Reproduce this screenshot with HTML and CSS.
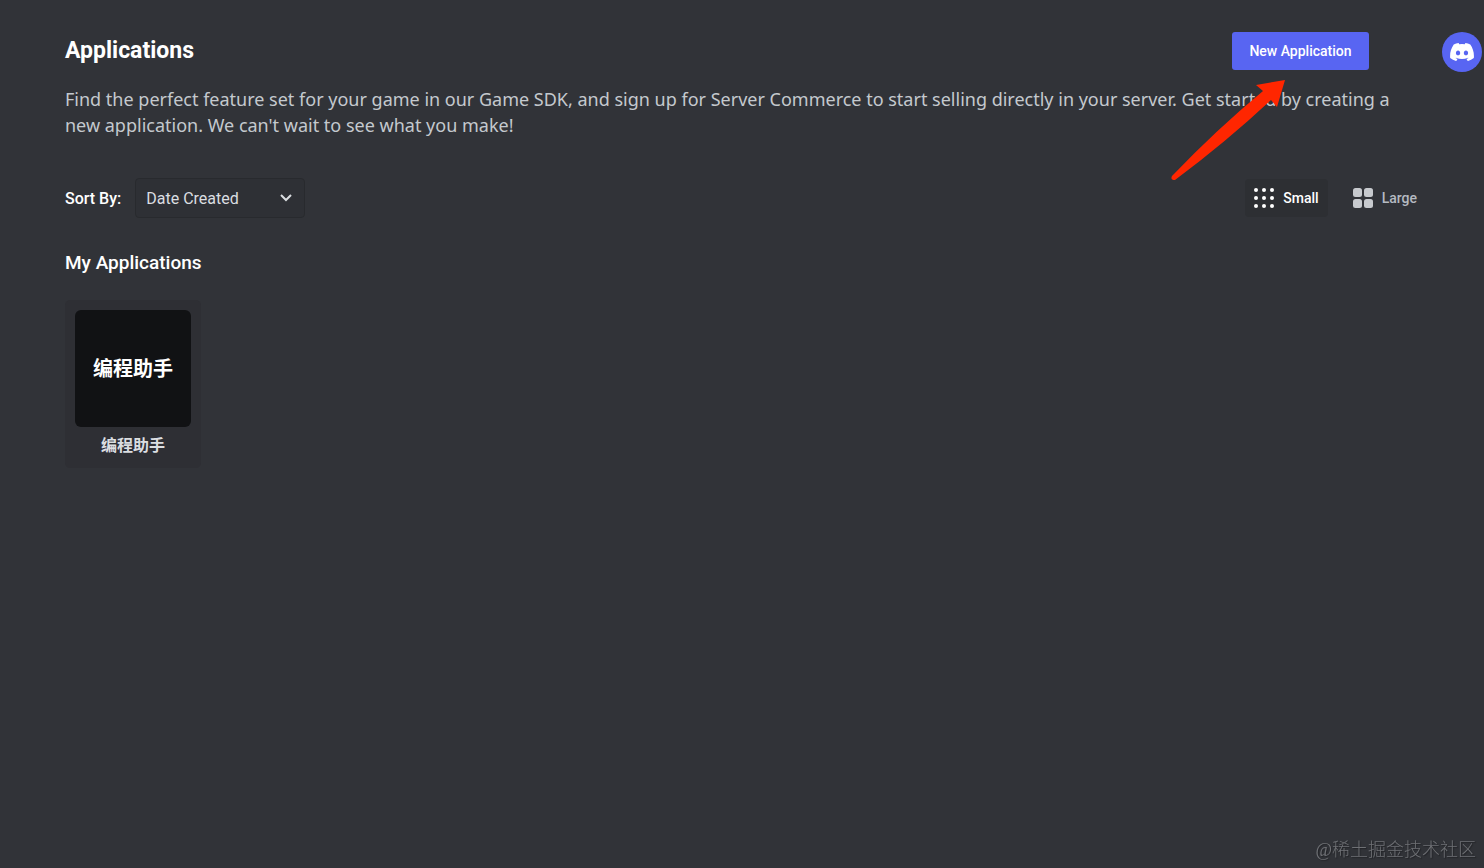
FILE: index.html
```html
<!DOCTYPE html>
<html lang="en">
<head>
    <meta charset="UTF-8">
    <title>Applications</title>
    <link rel="stylesheet" href="styles.css">
</head>
<body>
    <header class="page-header">
        <h1 class="page-title">Applications</h1>
        <div class="new-app">
            <button class="new-app-button" type="button">New Application</button>
            <svg class="arrow" viewBox="0 0 120 104" aria-hidden="true">
                <path fill="#ff2600" d="M117 2 L88 7 L95 13 Q48 52 4 98 Q2 102 7 102 Q58 64 103 22 L109 29 Z"/>
            </svg>
        </div>
        <a class="avatar" href="#" aria-label="Account">
            <svg viewBox="0 0 127 96" aria-hidden="true">
                <path fill="#fff" d="M107.7 8.07A105.15 105.15 0 0 0 81.47 0a72.06 72.06 0 0 0-3.36 6.83 97.68 97.68 0 0 0-29.11 0A72.37 72.37 0 0 0 45.64 0a105.89 105.89 0 0 0-26.25 8.09C2.79 32.65-1.71 56.6.54 80.21a105.73 105.73 0 0 0 32.17 16.15 77.7 77.7 0 0 0 6.89-11.11 68.42 68.42 0 0 1-10.85-5.18c.91-.66 1.8-1.34 2.66-2a75.57 75.57 0 0 0 64.32 0c.87.71 1.76 1.39 2.66 2a68.68 68.68 0 0 1-10.87 5.19 77 77 0 0 0 6.89 11.1 105.25 105.25 0 0 0 32.19-16.14c2.64-27.38-4.51-51.11-18.9-72.15ZM42.45 65.69C36.18 65.69 31 60 31 53s5-12.74 11.43-12.74S54 46 53.89 53s-5.05 12.69-11.44 12.69Zm42.24 0C78.41 65.69 73.25 60 73.25 53s5-12.74 11.44-12.74S96.23 46 96.12 53s-5.04 12.69-11.43 12.69Z"/>
            </svg>
        </a>
    </header>

    <main class="content">
        <p class="intro">Find the perfect feature set for your game in our Game SDK, and sign up for Server Commerce to start selling directly in your server. Get started by creating a new application. We can't wait to see what you make!</p>

        <div class="toolbar">
            <label class="sort-label" for="sortBy">Sort By:</label>
            <div class="sort-box">
                <select class="sort-select" id="sortBy">
                    <option>Date Created</option>
                </select>
                <svg class="chevron" viewBox="0 0 14 10" aria-hidden="true">
                    <path d="M2 2 L7 7 L12 2" fill="none" stroke="#dbdee1" stroke-width="2"/>
                </svg>
            </div>
            <div class="views">
                <button class="view active" type="button">
                    <svg class="view-icon" viewBox="0 0 20 20" fill="currentColor" aria-hidden="true">
                        <circle cx="2" cy="2" r="2"/><circle cx="10" cy="2" r="2"/><circle cx="18" cy="2" r="2"/>
                        <circle cx="2" cy="10" r="2"/><circle cx="10" cy="10" r="2"/><circle cx="18" cy="10" r="2"/>
                        <circle cx="2" cy="18" r="2"/><circle cx="10" cy="18" r="2"/><circle cx="18" cy="18" r="2"/>
                    </svg>
                    Small
                </button>
                <button class="view" type="button">
                    <svg class="view-icon" viewBox="0 0 20 20" fill="#c7cace" aria-hidden="true">
                        <rect width="9" height="9" rx="2.5"/><rect x="11" width="9" height="9" rx="2.5"/>
                        <rect y="11" width="9" height="9" rx="2.5"/><rect x="11" y="11" width="9" height="9" rx="2.5"/>
                    </svg>
                    Large
                </button>
            </div>
        </div>

        <h2 class="section-title">My Applications</h2>
        <div class="app-list">
            <a class="app-card" href="#">
                <span class="app-icon" lang="zh">编程助手</span>
                <span class="app-name" lang="zh">编程助手</span>
            </a>
        </div>
    </main>

    <div class="watermark" lang="zh">@稀土掘金技术社区</div>
</body>
</html>
```
FILE: styles.css
```css
* {
    box-sizing: border-box;
}
body {
    margin: 0;
    min-height: 100vh;
    background-color: #313338;
    color: #fff;
    font-family: Roboto, "Noto Sans CJK SC", sans-serif;
}
button, select {
    font-family: inherit;
}
.page-header {
    display: flex;
    align-items: flex-start;
    padding: 32px 2px 0 65px;
}
.page-title {
    flex: 1;
    margin: 0;
    font-size: 23px;
    line-height: 38px;
    font-weight: 700;
}
.new-app {
    position: relative;
    margin-right: 73px;
}
.new-app-button {
    display: block;
    min-width: 137px;
    height: 38px;
    padding: 0 16px;
    border: 0;
    border-radius: 3px;
    background-color: #5865f2;
    color: #fff;
    font-size: 14px;
    font-weight: 500;
    cursor: pointer;
}
.arrow {
    position: absolute;
    top: 46px;
    left: -64px;
    width: 120px;
    height: 104px;
    pointer-events: none;
}
.avatar {
    display: flex;
    align-items: center;
    justify-content: center;
    width: 40px;
    height: 40px;
    border-radius: 50%;
    background-color: #5865f2;
}
.avatar svg {
    width: 24px;
    height: 18px;
}
.content {
    padding: 14px 58px 32px 65px;
}
.intro {
    margin: 0;
    padding-right: 20px;
    color: #c4c9ce;
    font-family: "Noto Sans", sans-serif;
    font-size: 18px;
    line-height: 26px;
}
.toolbar {
    display: flex;
    align-items: center;
    margin-top: 40px;
}
.sort-label {
    margin-right: 14px;
    font-size: 16px;
    font-weight: 500;
}
.sort-box {
    position: relative;
}
.sort-select {
    appearance: none;
    display: block;
    width: 170px;
    height: 40px;
    padding: 0 32px 0 10px;
    border: 1px solid #282a2e;
    border-radius: 4px;
    background-color: #2e3035;
    color: #dbdee1;
    font-size: 16px;
}
.chevron {
    position: absolute;
    top: 15px;
    right: 12px;
    width: 14px;
    height: 10px;
    pointer-events: none;
}
.views {
    display: flex;
    gap: 16px;
    margin-left: auto;
}
.view {
    display: flex;
    align-items: center;
    gap: 9px;
    height: 38px;
    padding: 0 9px;
    border: 0;
    border-radius: 4px;
    background: none;
    color: #b5bac1;
    font-size: 14px;
    font-weight: 500;
    cursor: pointer;
}
.view.active {
    background-color: #2d2f33;
    color: #fff;
}
.view-icon {
    width: 20px;
    height: 20px;
}
.section-title {
    margin: 32px 0 24px;
    font-size: 19px;
    line-height: 26px;
    font-weight: 500;
}
.app-list {
    display: flex;
    flex-wrap: wrap;
    gap: 16px;
}
.app-card {
    display: flex;
    flex-direction: column;
    width: 136px;
    padding: 10px;
    border-radius: 5px;
    background-color: #2e2f34;
    color: #dbdee1;
    text-align: center;
    text-decoration: none;
}
.app-icon {
    display: flex;
    align-items: center;
    justify-content: center;
    height: 117px;
    padding-bottom: 2px;
    border-radius: 6px;
    background-color: #111214;
    color: #fff;
    font-size: 20px;
    font-weight: 700;
}
.app-name {
    margin-top: 7px;
    font-size: 16px;
    line-height: 24px;
    font-weight: 700;
}
.watermark {
    position: fixed;
    right: 8px;
    bottom: 5px;
    color: #6f7175;
    font-family: "Liberation Serif", "Noto Sans CJK SC", serif;
    font-size: 18px;
    font-weight: 300;
    line-height: 26px;
    text-shadow: 1px 1px 1px #222327;
}
```
